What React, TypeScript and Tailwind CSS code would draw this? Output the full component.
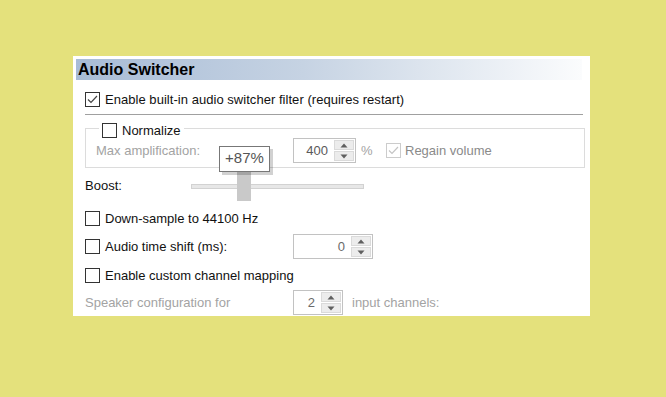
const font = { fontFamily: '"Liberation Sans", Arial, sans-serif' };

const Check = ({ checked = false, disabled = false }: { checked?: boolean; disabled?: boolean }) => (
  <div
    className={`w-[15px] h-[15px] shrink-0 border bg-white flex items-center justify-center ${
      disabled ? "border-[#cccccc]" : "border-[#333333]"
    }`}
  >
    {checked && (
      <svg width="11" height="9" viewBox="0 0 11 9">
        <path d="M1 4.5 L4 7.5 L10 1" fill="none" stroke={disabled ? "#c4c4c4" : "#444444"} strokeWidth="1.2" />
      </svg>
    )}
  </div>
);

const Arrow = ({ up }: { up?: boolean }) => (
  <svg width="8" height="5" viewBox="0 0 8 5">
    <path d={up ? "M0.5 4.5 L4 0.5 L7.5 4.5 Z" : "M0.5 0.5 L4 4.5 L7.5 0.5 Z"} fill="#5f5f5f" />
  </svg>
);

const Spin = ({ value, width, textClass }: { value: string; width: string; textClass: string }) => (
  <div className={`${width} h-[25px] shrink-0 border border-[#c2c2c2] bg-white flex`}>
    <div className={`flex-1 flex items-center justify-end pr-[6px] text-[13px] ${textClass}`}>{value}</div>
    <div className="w-[21px] flex flex-col gap-px p-px pl-0">
      <div className="flex-1 bg-[#ececec] border border-[#dadada] flex items-center justify-center">
        <Arrow up />
      </div>
      <div className="flex-1 bg-[#ececec] border border-[#dadada] flex items-center justify-center">
        <Arrow />
      </div>
    </div>
  </div>
);

export default function App() {
  return (
    <div className="w-full h-[397px] bg-[#e4e17c] pt-[56px] pl-[73px]" style={font}>
      <div className="w-[517px] h-[260px] bg-white pt-[3px] pl-[3px] pr-[8px] text-[13px] text-[#111111]">
        <div className="h-[21px] bg-[linear-gradient(to_right,#a8bcd6,#c6d3e3_45%,#fbfcfd)] flex items-center pl-[2px] text-[16px] font-bold text-black">
          Audio Switcher
        </div>

        <div className="pl-[9px]">
          <div className="mt-[12px] h-[15px] flex items-center gap-[5px]">
            <Check checked />
            <span className="tracking-[0.04px]">Enable built-in audio switcher filter (requires restart)</span>
          </div>

          <div className="mt-[7px] h-px bg-[#a0a0a0] w-[498px]" />

          <div className="mt-[13px] w-[500px] border border-[#dcdcdc] pb-[4px]">
            <div className="-mt-[6px] ml-[13px] w-fit bg-white px-[3px] flex items-center gap-[5px] h-[15px]">
              <Check />
              <span>Normalize</span>
            </div>
            <div className="h-[25px] flex items-center pl-[10px] text-[#a3a3a3]">
              <span className="w-[197px]">Max amplification:</span>
              <Spin value="400" width="w-[63px]" textClass="text-[#5a5a5a]" />
              <span className="w-[30px] pl-[5px]">%</span>
              <Check checked disabled />
              <span className="ml-[4px] text-[#8a8a8a]">Regain volume</span>
            </div>
          </div>

          <div className="mt-[3px] h-[30px] flex items-center">
            <span className="w-[106px]">Boost:</span>
            <div className="relative w-[173px] h-[5px] bg-[#e7e7e7] border border-[#d2d2d2]">
              <div className="absolute left-[45px] -top-[13px] w-[14px] h-[29px] bg-[#c9c9c9]" />
              <div className="absolute left-[27px] -top-[39px] w-[51px] h-[26px] bg-white border border-[#777777] shadow-[3px_3px_0_rgba(0,0,0,0.18)] flex items-center justify-center text-[15px] text-[#555555]">
                +87%
              </div>
            </div>
          </div>

          <div className="mt-[10px] h-[15px] flex items-center gap-[5px]">
            <Check />
            <span>Down-sample to 44100 Hz</span>
          </div>

          <div className="mt-[8px] h-[25px] flex items-center">
            <div className="w-[208px] flex items-center gap-[5px]">
              <Check />
              <span>Audio time shift (ms):</span>
            </div>
            <Spin value="0" width="w-[80px]" textClass="text-[#6a6a6a]" />
          </div>

          <div className="mt-[9px] h-[15px] flex items-center gap-[5px]">
            <Check />
            <span>Enable custom channel mapping</span>
          </div>

          <div className="mt-[7px] h-[25px] flex items-center text-[#a3a3a3]">
            <span className="w-[208px]">Speaker configuration for</span>
            <Spin value="2" width="w-[50px]" textClass="text-[#6a6a6a]" />
            <span className="ml-[9px]">input channels:</span>
          </div>
        </div>
      </div>
    </div>
  );
}
